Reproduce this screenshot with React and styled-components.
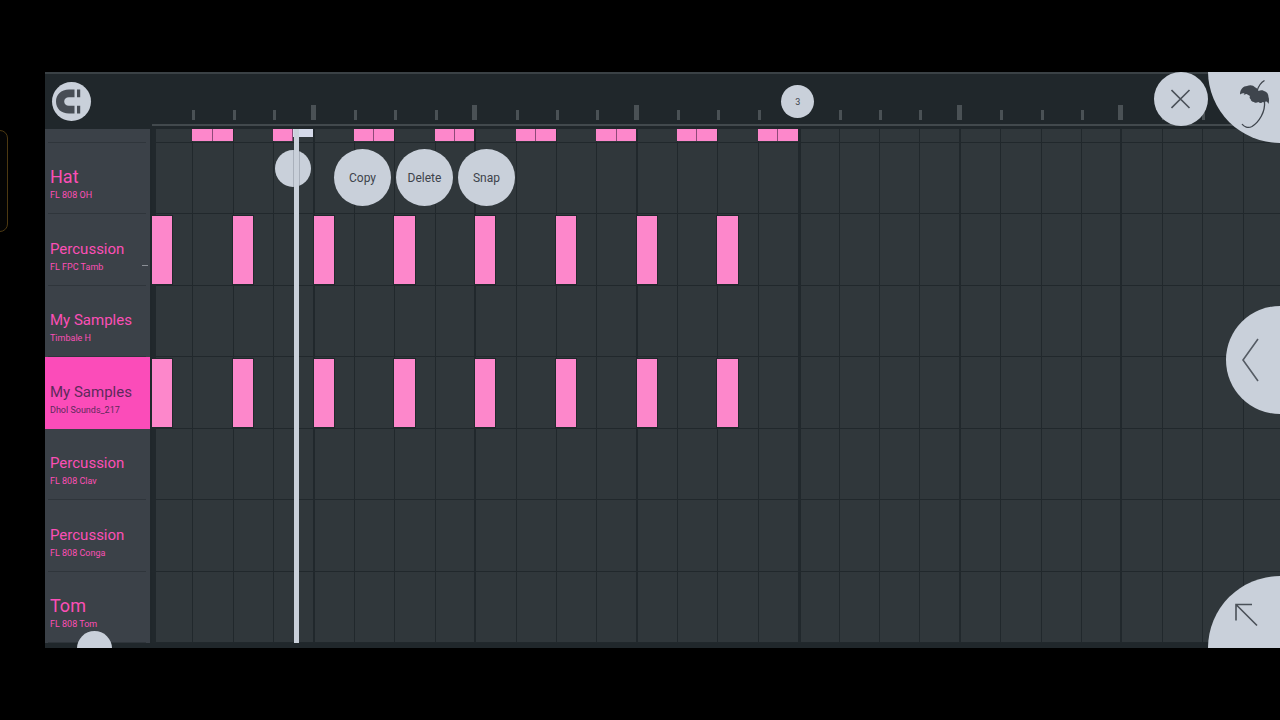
import React from "react";
import styled, { createGlobalStyle, css } from "styled-components";

const color = {
  ruler: "#20272b",
  grid: "#30373b",
  line: "#21282c",
  label: "#3b4148",
  pink: "#fb4fb6",
  hot: "#fb4cb9",
  note: "#fd87cb",
  knob: "#c9d0da",
  ink: "#3d434b",
};

const GlobalStyle = createGlobalStyle`
  * { box-sizing: border-box; }
  body { margin: 0; background: #000; font-family: Roboto, "Liberation Sans", sans-serif; }
  button { font: inherit; color: inherit; border: 0; padding: 0; cursor: pointer; }
`;

const Screen = styled.div`
  position: relative;
  min-height: 100vh;
  padding: 10vh 0 10vh 45px;
  display: flex;
  overflow: hidden;
  background: #000;
`;

const EdgeHandle = styled.div`
  position: absolute;
  left: -10px;
  top: 130px;
  width: 18px;
  height: 102px;
  border: 1px solid #4d3912;
  border-radius: 8px;
  background: #040404;
`;

const Panel = styled.main`
  position: relative;
  flex: 1;
  min-width: 0;
  display: flex;
  flex-direction: column;
  overflow: hidden;
  background: ${color.ruler};
`;

const Header = styled.header`
  display: flex;
  height: 57px;
  border-top: 2px solid #3a4145;
`;

const Tools = styled.div`
  width: 107px;
  padding: 8px 7px;
`;

const Knob = styled.button`
  display: flex;
  align-items: center;
  justify-content: center;
  flex: none;
  width: ${(p) => p.$size}px;
  height: ${(p) => p.$size}px;
  border-radius: 50%;
  background: ${color.knob};
  color: ${color.ink};
`;

const Beats = styled.div`
  display: grid;
  grid-template-columns: repeat(28, minmax(0, 1fr));
  margin-right: -3px;
`;

const Ruler = styled.div`
  flex: 1;
  min-width: 0;
  display: flex;
  flex-direction: column;
  justify-content: flex-end;
  border-bottom: 3px solid ${color.ruler};
`;

const Ticks = styled(Beats)`
  height: 50px;
  align-items: end;
  padding-bottom: 4px;
  border-bottom: 2px solid #42494d;
`;

const TickSlot = styled.div`
  position: relative;
  display: flex;
`;

const Tick = styled.div`
  width: ${(p) => (p.$bar ? 5 : 3)}px;
  height: ${(p) => (p.$bar ? 15 : 10)}px;
  margin-left: ${(p) => (p.$bar ? -3 : 0)}px;
  background: #4a5155;
`;

const Marker = styled.div`
  position: absolute;
  left: -17px;
  bottom: 2px;
  width: 33px;
  height: 33px;
  border-radius: 50%;
  display: flex;
  align-items: center;
  justify-content: center;
  font-size: 9px;
  background: ${color.knob};
  color: ${color.ink};
`;

const Body = styled.div`
  flex: 1;
  display: flex;
  min-height: 0;
`;

const Labels = styled.ul`
  width: 105px;
  margin: 0 2px 0 0;
  padding: 0;
  list-style: none;
  display: flex;
  flex-direction: column;
  background: ${color.label};
`;

const rowSize = css`
  flex: ${(p) => (p.$cut ? "none" : "1 1 0")};
  height: ${(p) => (p.$cut ? "14px" : "auto")};
  min-height: 0;
`;

const Label = styled.li`
  ${rowSize}
  position: relative;
  display: flex;
  flex-direction: column;
  justify-content: flex-end;
  padding: 0 0 11px 5px;
  background: ${(p) =>
    p.$active
      ? color.hot
      : `linear-gradient(#2f353b, #2f353b) 3px 100% / 98px 1px no-repeat`};
  color: ${(p) => (p.$active ? "#5d2a5b" : color.pink)};
`;

const Name = styled.strong`
  font-size: ${(p) => (p.$large ? 18 : 15)}px;
  line-height: 20px;
  font-weight: 400;
  white-space: nowrap;
`;

const Sample = styled.span`
  font-size: 9px;
  line-height: 16px;
`;

const Meter = styled.i`
  position: absolute;
  right: 2px;
  bottom: 20px;
  width: 6px;
  height: 1px;
  background: #8b8f96;
`;

const Grid = styled.section`
  position: relative;
  flex: 1;
  min-width: 0;
  display: flex;
  flex-direction: column;
  background: ${color.grid};
`;

const Row = styled(Beats)`
  ${rowSize}
  border-bottom: 1px solid ${color.line};
`;

const lineWidth = { start: 4, end: 3, bar: 2, beat: 1 };

const Beat = styled.div`
  display: flex;
  padding: ${(p) => (p.$cut ? "0 0 1px" : "2px 0 1px")};
  margin-left: ${(p) => (p.$kind === "bar" ? -1 : 0)}px;
  padding-left: ${(p) => (p.$kind === "bar" ? 1 : 0)}px;
  background: linear-gradient(${color.line}, ${color.line}) 0 0 /
    ${(p) => lineWidth[p.$kind]}px 100% no-repeat;
`;

const Note = styled.div`
  flex: 0 0 50%;
  background: ${(p) => (p.$picked ? "#d5daea" : color.note)};
  box-shadow: ${(p) => (p.$top ? "none" : `0 0 0 1px ${color.line}`)};
  margin-bottom: ${(p) => (p.$picked ? 4 : 0)}px;
  border-right: ${(p) => (p.$split ? 1 : 0)}px solid #8d4a78;
`;

const Footer = styled.footer`
  height: 5px;
  background: ${color.ruler};
`;

const Playhead = styled.div`
  position: absolute;
  left: 142px;
  top: 0;
  bottom: 0;
  width: 5px;
  background: ${color.knob};
`;

const PlayheadKnob = styled.div`
  position: absolute;
  left: 123px;
  top: 21px;
  width: 36px;
  height: 37px;
  border-radius: 50%;
  background: linear-gradient(90deg, transparent 18px, #a9b0bb 18px, #a9b0bb 25px, transparent 25px)
    ${color.knob};
`;

const Menu = styled.div`
  position: absolute;
  left: 182px;
  top: 20px;
  display: flex;
  gap: 5px;
  font-size: 12px;
`;

const Floating = styled(Knob)`
  position: absolute;
  ${(p) => p.$place}
`;

const rows = [
  { cut: true },
  { name: "Hat", sample: "FL 808 OH", large: true },
  { name: "Percussion", sample: "FL FPC Tamb", hits: true, meter: true },
  { name: "My Samples", sample: "Timbale H" },
  { name: "My Samples", sample: "Dhol Sounds_217", hits: true, active: true },
  { name: "Percussion", sample: "FL 808 Clav" },
  { name: "Percussion", sample: "FL 808 Conga" },
  { name: "Tom", sample: "FL 808 Tom", large: true },
];

const beats = Array.from({ length: 28 }, (_, i) => i);

const kindOf = (i) =>
  i === 0 ? "start" : i === 16 ? "end" : i % 4 === 0 ? "bar" : "beat";

function Notes({ row, beat }) {
  if (beat >= 16) return null;
  if (row.cut && beat % 2 === 1)
    return (
      <>
        <Note $top $split />
        <Note $top $picked={beat === 3} />
      </>
    );
  if (row.hits && beat % 2 === 0) return <Note />;
  return null;
}

function MagnetIcon() {
  return (
    <svg width="39" height="39" viewBox="0 0 39 39" aria-hidden="true">
      <path
        d="M22.500 7.500H17C9 7.500 4 12.500 4 19.500S9 31.500 17 31.500H22.500V23.800H17C14 23.800 12.200 22 12.200 19.500S14 15.200 17 15.200H22.500Z"
        fill="#474d55"
      />
      <path d="M25 7.500H28.200V15.200H25ZM25 23.800H28.200V31.500H25Z" fill="#474d55" />
    </svg>
  );
}

function PalmIcon() {
  return (
    <svg width="72" height="72" viewBox="0 0 72 72" aria-hidden="true">
      <path
        d="M32 23.500C32 18 35.500 15 39 15C42 13.500 45.500 14.200 47 16.300C49 17 50 18.500 50.500 20C52 19.200 54 19 55.500 19.700C59 20.500 60.500 23 60.500 26C61.200 28 61.200 30.500 60.500 33C60 31.500 59 30.700 58 30.300C57.500 31 56 31.500 54.700 31C53.500 32.500 51.500 32 50.300 31C49 32 47 32.200 46 31C44 31 42.700 29.500 42.700 28.300C41.500 27.500 41.300 26 42 25C41 24.500 39.500 23.700 38.700 23C37 23.500 36 23.500 35.500 24.200L36.500 22.300C34.500 22.300 33 22.800 32 23.500Z"
        fill="#3f454d"
      />
      <path
        d="M56.500 9.500C53 11.500 50.500 15 49 20M56.500 30.500C57.500 41 51 51 44 55.500C40 57.500 36 56 34 53"
        fill="none"
        stroke="#3f454d"
        strokeWidth="1.300"
      />
    </svg>
  );
}

export default function App() {
  return (
    <>
      <GlobalStyle />
      <Screen>
        <EdgeHandle />
        <Panel>
          <Header>
            <Tools>
              <Knob $size={39} aria-label="Snap to grid">
                <MagnetIcon />
              </Knob>
            </Tools>
            <Ruler>
              <Ticks>
                {beats.map((i) => (
                  <TickSlot key={i}>
                    {i === 16 && <Marker>3</Marker>}
                    {i > 0 && i !== 16 && <Tick $bar={i % 4 === 0} />}
                  </TickSlot>
                ))}
              </Ticks>
            </Ruler>
          </Header>
          <Body>
            <Labels>
              {rows.map((row, r) => (
                <Label key={r} $cut={row.cut} $active={row.active}>
                  {row.name && (
                    <>
                      <Name $large={row.large}>{row.name}</Name>
                      <Sample>{row.sample}</Sample>
                    </>
                  )}
                  {row.meter && <Meter />}
                </Label>
              ))}
            </Labels>
            <Grid>
              {rows.map((row, r) => (
                <Row key={r} $cut={row.cut}>
                  {beats.map((i) => (
                    <Beat key={i} $kind={kindOf(i)} $cut={row.cut}>
                      <Notes row={row} beat={i} />
                    </Beat>
                  ))}
                </Row>
              ))}
              <PlayheadKnob />
              <Playhead />
              <Menu>
                <Knob $size={57}>Copy</Knob>
                <Knob $size={57}>Delete</Knob>
                <Knob $size={57}>Snap</Knob>
              </Menu>
            </Grid>
          </Body>
          <Footer />
          <Floating
            $size={54}
            $place="right: 72px; top: 0;"
            aria-label="Close"
          >
            <svg width="20" height="20" viewBox="0 0 20 20" aria-hidden="true">
              <path d="M0.500 1L18.500 19M18.500 1L0.500 19" stroke="#4a5058" strokeWidth="1.600" />
            </svg>
          </Floating>
          <Floating
            $size={144}
            $place="right: -72px; top: -73px; align-items: flex-end; justify-content: flex-start;"
            aria-label="Main menu"
          >
            <PalmIcon />
          </Floating>
          <Floating
            $size={108}
            $place="right: -54px; top: calc(50% - 54px); justify-content: flex-start; padding-left: 16px;"
            aria-label="Open side panel"
          >
            <svg width="18" height="44" viewBox="0 0 18 44" aria-hidden="true">
              <path d="M16 1L1 22L16 43" fill="none" stroke="#555b64" strokeWidth="1.600" />
            </svg>
          </Floating>
          <Floating
            $size={144}
            $place="right: -72px; bottom: -72px; align-items: flex-start; justify-content: flex-start; padding: 27px;"
            aria-label="Expand"
          >
            <svg width="24" height="24" viewBox="0 0 24 24" aria-hidden="true">
              <path d="M1 17.500V1.500H17M1 1.500L22 22.500" fill="none" stroke="#4a5058" strokeWidth="1.600" />
            </svg>
          </Floating>
          <Floating
            $size={35}
            $place="left: 32px; bottom: -18px;"
            aria-label="Add track"
          />
        </Panel>
      </Screen>
    </>
  );
}
